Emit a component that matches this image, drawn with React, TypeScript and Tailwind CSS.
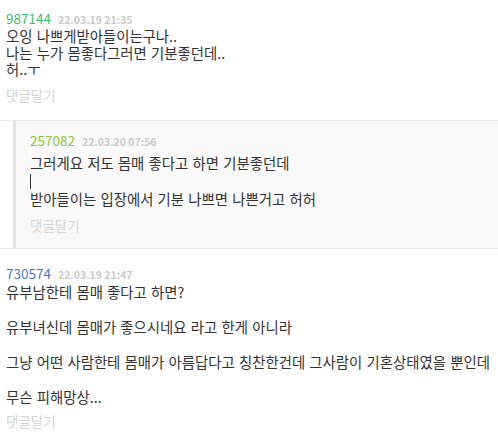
import React from "react";

const font = { fontFamily: '"Noto Sans CJK KR", "Noto Sans", sans-serif' };

const Meta: React.FC<{ nick: string; nickColor: string; date: string }> = ({ nick, nickColor, date }) => (
  <div className="h-[18px] leading-[18px] whitespace-nowrap">
    <span className={`text-[13.5px] ${nickColor}`}>{nick}</span>
    <span className="ml-[7px] text-[10.5px] font-bold text-[#cacaca]">{date}</span>
  </div>
);

const Reply: React.FC<{ className?: string }> = ({ className = "mt-[9px]" }) => (
  <div className={`${className} text-[13.5px] leading-[16px] text-[#d4d4d4]`}>댓글달기</div>
);

const body = "text-[14.4px] leading-[18px] [word-spacing:1px]";

export default function App() {
  return (
    <div className="w-[498px] h-[437px] overflow-hidden bg-white text-[#333333]" style={font}>
      {/* first comment */}
      <div className="border-b border-[#e9e9e9] px-[6px] pt-[8px] pb-[17px]">
        <Meta nick="987144" nickColor="text-[#3bbf6e]" date="22.03.19 21:35" />
        <div className="mt-[2px] text-[14.4px] leading-[16.5px] [word-spacing:1px]">
          <div>오잉 나쁘게받아들이는구나..</div>
          <div>나는 누가 몸좋다그러면 기분좋던데..</div>
          <div>허..ㅜ</div>
        </div>
        <Reply className="mt-[9.5px]" />
      </div>

      {/* nested reply */}
      <div className="border-b border-[#e9e9e9] pl-[13px]">
        <div className="border-l-[3px] border-[#e3e3e3] bg-[#f9f9f9] pl-[14px] pt-[9px] pb-[15px]">
          <Meta nick="257082" nickColor="text-[#8cc63f]" date="22.03.20 07:56" />
          <div className={`mt-[6px] ${body}`}>
            <div>그러게요 저도 몸매 좋다고 하면 기분좋던데</div>
            <div className="h-[18px] flex items-center">
              <span className="block w-px h-[15px] bg-[#333333]" />
            </div>
            <div>받아들이는 입장에서 기분 나쁘면 나쁜거고 허허</div>
          </div>
          <Reply className="mt-[9px]" />
        </div>
      </div>

      {/* third comment */}
      <div className="px-[6px] pt-[14px]">
        <Meta nick="730574" nickColor="text-[#4a78c8]" date="22.03.19 21:47" />
        <div className="mt-[2px] text-[14.4px] leading-[17.5px] [word-spacing:1px]">
          <div>유부남한테 몸매 좋다고 하면?</div>
          <div>&nbsp;</div>
          <div>유부녀신데 몸매가 좋으시네요 라고 한게 아니라</div>
          <div>&nbsp;</div>
          <div>그냥 어떤 사람한테 몸매가 아름답다고 칭찬한건데 그사람이 기혼상태였을 뿐인데</div>
          <div>&nbsp;</div>
          <div>무슨 피해망상...</div>
        </div>
        <Reply className="mt-[7px]" />
      </div>
    </div>
  );
}
